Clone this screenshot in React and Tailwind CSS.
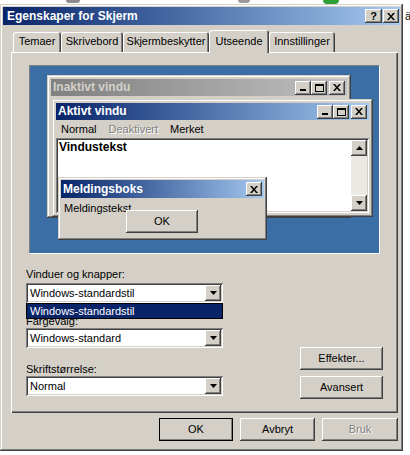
import React from 'react';

const raised = 'shadow-[inset_-1px_-1px_#404040,inset_1px_1px_#ffffff,inset_-2px_-2px_#808080]';
const frame = 'shadow-[inset_-1px_-1px_#404040,inset_1px_1px_#d4d0c8,inset_-2px_-2px_#808080,inset_2px_2px_#ffffff]';
const sunken = 'shadow-[inset_1px_1px_#808080,inset_-1px_-1px_#ffffff,inset_2px_2px_#404040,inset_-2px_-2px_#d4d0c8]';

const CloseGlyph = () => (
  <svg width="8" height="7" viewBox="0 0 8 7">
    <path d="M0 0h2l2 2.4L6 0h2L5 3.5 8 7H6L4 4.6 2 7H0l3-3.5z" fill="#000" />
  </svg>
);

const MinGlyph = () => <div className="w-[6px] h-[2px] bg-black mt-[5px]" />;
const MaxGlyph = () => <div className="w-[9px] h-[8px] border border-black border-t-2" />;

const DownArrow = () => (
  <svg width="7" height="4" viewBox="0 0 7 4">
    <path d="M0 0h7L3.5 4z" fill="#000" />
  </svg>
);

const UpArrow = () => (
  <svg width="7" height="4" viewBox="0 0 7 4">
    <path d="M0 4h7L3.5 0z" fill="#000" />
  </svg>
);

const CapButton = ({ children, className = '' }) => (
  <div className={`w-[16px] h-[14px] bg-[#d4d0c8] flex items-center justify-center ${raised} ${className}`}>
    {children}
  </div>
);

const WindowButtons = () => (
  <div className="ml-auto flex items-center">
    <CapButton><MinGlyph /></CapButton>
    <CapButton><MaxGlyph /></CapButton>
    <CapButton className="ml-[2px]"><CloseGlyph /></CapButton>
  </div>
);

const Tab = ({ label, width, active }) =>
  active ? (
    <div
      className={`relative z-10 h-[23px] -mb-px flex items-start justify-center pt-[5px] bg-[#d4d0c8] rounded-t-[3px] shadow-[inset_1px_1px_#ffffff,inset_-1px_0_#404040,inset_-2px_0_#808080] ${width}`}
    >
      {label}
    </div>
  ) : (
    <div
      className={`h-[20px] flex items-center justify-center pb-[1px] bg-[#d4d0c8] rounded-t-[3px] shadow-[inset_1px_1px_#ffffff,inset_-1px_0_#404040,inset_-2px_0_#808080] ${width}`}
    >
      {label}
    </div>
  );

const Combo = ({ value }) => (
  <div className={`h-[20px] w-[197px] bg-white p-[2px] flex items-center ${sunken}`}>
    <span className="flex-1 pl-[2px] text-[11px]">{value}</span>
    <div className={`w-[16px] h-[16px] bg-[#d4d0c8] flex items-center justify-center ${raised}`}>
      <DownArrow />
    </div>
  </div>
);

const PushButton = ({ label, width, disabled, isDefault }) => (
  <div
    className={`h-[23px] ${width} bg-[#d4d0c8] flex items-center justify-center ${raised} ${
      isDefault ? 'outline outline-1 outline-black -outline-offset-1' : ''
    } ${disabled ? 'text-[#808080] [text-shadow:1px_1px_0_#ffffff]' : ''}`}
  >
    {label}
  </div>
);

const Preview = () => (
  <div className="ml-[18px] mt-[13px] w-[351px] h-[189px] border border-t-[#808080] border-l-[#808080] border-b-white border-r-white">
    <div className="relative w-full h-full bg-[#3a6ea5]">
      {/* inactive window */}
      <div className={`absolute left-[17px] top-[9px] w-[304px] h-[143px] bg-[#d4d0c8] p-[4px] ${frame}`}>
        <div className="h-[17px] bg-linear-to-r from-[#808080] to-[#c0c0c0] flex items-center pl-[2px] pr-[2px]">
          <span className="text-[#d4d0c8] font-bold text-[12px]">Inaktivt vindu</span>
          <WindowButtons />
        </div>
      </div>

      {/* active window */}
      <div className={`absolute left-[22px] top-[33px] w-[321px] h-[118px] bg-[#d4d0c8] p-[4px] flex flex-col ${frame}`}>
        <div className="h-[17px] shrink-0 bg-linear-to-r from-[#0a246a] to-[#a6caf0] flex items-center pl-[2px] pr-[2px]">
          <span className="text-white font-bold text-[12px]">Aktivt vindu</span>
          <WindowButtons />
        </div>
        <div className="h-[18px] shrink-0 flex items-center gap-[12px] pl-[5px]">
          <span>Normal</span>
          <span className="text-[#808080] [text-shadow:1px_1px_0_#ffffff]">Deaktivert</span>
          <span>Merket</span>
        </div>
        <div className={`flex-1 bg-white p-[2px] flex ${sunken}`}>
          <div className="flex-1 pl-[1px] font-bold text-[12px] leading-[14px]">Vindustekst</div>
          <div className="w-[16px] flex flex-col bg-[#ebe9e4]">
            <div className={`h-[16px] bg-[#d4d0c8] flex items-center justify-center ${raised}`}>
              <UpArrow />
            </div>
            <div className="flex-1" />
            <div className={`h-[16px] bg-[#d4d0c8] flex items-center justify-center ${raised}`}>
              <DownArrow />
            </div>
          </div>
        </div>
      </div>

      {/* message box */}
      <div className={`absolute left-[28px] top-[111px] w-[209px] h-[63px] bg-[#d4d0c8] p-[3px] flex flex-col ${frame}`}>
        <div className="h-[18px] shrink-0 bg-linear-to-r from-[#0a246a] to-[#a6caf0] flex items-center pl-[2px] pr-[2px]">
          <span className="text-white font-bold text-[12px]">Meldingsboks</span>
          <CapButton className="ml-auto"><CloseGlyph /></CapButton>
        </div>
        <div className="relative flex-1">
          <div className="pl-[3px] pt-[4px]">Meldingstekst</div>
          <div className={`absolute left-[65px] top-[12px] w-[72px] h-[23px] bg-[#d4d0c8] flex items-center justify-center ${raised}`}>
            OK
          </div>
        </div>
      </div>
    </div>
  </div>
);

const Dialog = () => (
  <div className={`w-[403px] h-[447px] shrink-0 bg-[#d4d0c8] p-[3px] flex flex-col ${frame}`}>
    <div className="h-[18px] shrink-0 bg-linear-to-r from-[#0a246a] to-[#a6caf0] flex items-center pl-[4px] pr-[1px]">
      <span className="text-white font-bold text-[12px]">Egenskaper for Skjerm</span>
      <div className="ml-auto flex items-center gap-[1px]">
        <CapButton className="w-[17px]"><span className="font-bold text-[11px] leading-none">?</span></CapButton>
        <CapButton><CloseGlyph /></CapButton>
      </div>
    </div>

    <div className="px-[8px]">
      <div className="mt-[5px] h-[22px] flex items-end pl-[2px]">
        <Tab label="Temaer" width="w-[48px]" />
        <Tab label="Skrivebord" width="w-[62px]" />
        <Tab label="Skjermbeskytter" width="w-[86px]" />
        <Tab label="Utseende" width="w-[60px]" active />
        <Tab label="Innstillinger" width="w-[66px]" />
      </div>

      <div className="relative w-[387px] h-[361px] bg-[#d4d0c8] flex flex-col shadow-[inset_1px_1px_#ffffff,inset_-1px_-1px_#404040,inset_-2px_-2px_#808080]">
        <Preview />

        <div className="flex ml-[15px] mt-[14px]">
          <div className="w-[197px] flex flex-col">
            <div className="h-[13px] leading-[13px]">Vinduer og knapper:</div>
            <div className="relative mt-[2px]">
              <Combo value="Windows-standardstil" />
              <div className="absolute left-0 top-[20px] z-10 w-[197px] h-[16px] bg-[#0a246a] border border-black text-white flex items-center pl-[3px]">
                Windows-standardstil
              </div>
            </div>
            <div className="mt-[12px] h-[13px] leading-[13px]">Fargevalg:</div>
            <Combo value="Windows-standard" />
            <div className="mt-[15px] h-[13px] leading-[13px]">Skriftstørrelse:</div>
            <Combo value="Normal" />
          </div>
          <div className="ml-[77px] mt-[79px] flex flex-col gap-[6px]">
            <PushButton label="Effekter..." width="w-[83px]" />
            <PushButton label="Avansert" width="w-[83px]" />
          </div>
        </div>
      </div>

      <div className="mt-[5px] w-[387px] flex justify-end gap-[7px]">
        <PushButton label="OK" width="w-[74px]" isDefault />
        <PushButton label="Avbryt" width="w-[75px]" />
        <PushButton label="Bruk" width="w-[76px]" disabled />
      </div>
    </div>
  </div>
);

export default function App() {
  return (
    <div className="w-[410px] h-[455px] bg-white overflow-hidden text-[11px] leading-[13px] text-black [font-family:'Liberation_Sans',Arial,sans-serif]">
      <div className="h-[4px] flex items-start">
        <div className="ml-[66px] w-[14px] h-[3px] rounded-b-full bg-[#8c8c8c]" />
        <div className="ml-[158px] w-[12px] h-[3px] rounded-b-full bg-[#9a9a9a]" />
        <div className="ml-[73px] w-[16px] h-[4px] rounded-b-full bg-[#2e9e36]" />
      </div>
      <div className="flex">
        <Dialog />
        <span className="mt-[6px] ml-[2px]">ä</span>
      </div>
    </div>
  );
}
